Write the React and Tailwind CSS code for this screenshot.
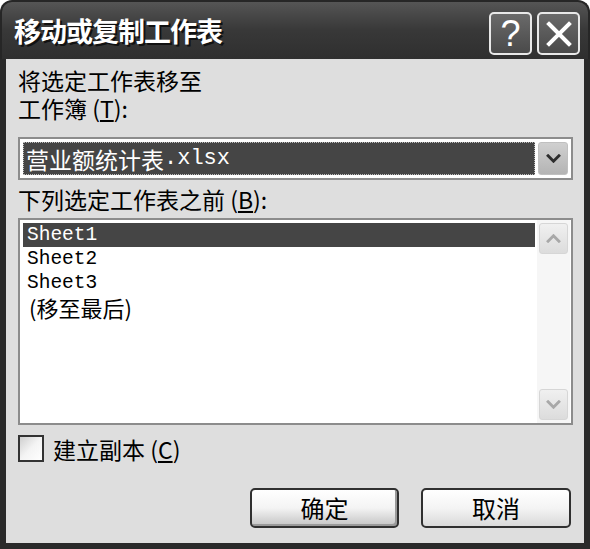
import React from "react";

const cjk = { fontFamily: '"Noto Sans CJK SC", "Noto Sans", sans-serif' };
const mono = { fontFamily: '"Liberation Mono", "Noto Sans CJK SC", monospace' };

function Chevron({ up = false, color = "#333", w = 16 }) {
  return (
    <svg width={w} height={w * 0.6} viewBox="0 0 16 10">
      <polyline
        points={up ? "2,8 8,2 14,8" : "2,2 8,8 14,2"}
        fill="none"
        stroke={color}
        strokeWidth="3.2"
        strokeLinecap="square"
      />
    </svg>
  );
}

export default function App() {
  return (
    <div className="w-[590px] h-[549px] bg-white flex flex-col" style={cjk}>
      {/* title bar */}
      <div className="h-[59px] rounded-t-[12px] bg-gradient-to-b from-[#555555] via-[#383838] to-[#2f2f2f] flex items-center pl-[12px] pr-[8px] border-x-[2px] border-t-[2px] border-[#262626]">
        <div className="flex-1 text-white text-[27px] font-bold leading-none tracking-[-1px] [text-shadow:2px_2px_0_#111]">
          移动或复制工作表
        </div>
        <div className="flex gap-[5px] mt-[6px]">
          <div className="w-[43px] h-[43px] rounded-[5px] border-[2px] border-[#e8e8e8] bg-gradient-to-b from-[#6a6a6a] to-[#4a4a4a] flex items-center justify-center text-white text-[36px] leading-none font-['Liberation_Sans']">
            ?
          </div>
          <div className="w-[43px] h-[43px] rounded-[5px] border-[2px] border-[#e8e8e8] bg-gradient-to-b from-[#6a6a6a] to-[#4a4a4a] flex items-center justify-center">
            <svg width="26" height="26" viewBox="0 0 26 26">
              <path d="M3 3 L23 23 M23 3 L3 23" stroke="#fff" strokeWidth="4" strokeLinecap="square" />
            </svg>
          </div>
        </div>
      </div>

      {/* body */}
      <div className="flex-1 bg-[#dedede] border-x-[6px] border-b-[6px] border-[#2a2a2a] pl-[12px] pr-[11px] flex flex-col text-[23px] leading-[24px] text-black">
        <div className="mt-[7px] h-[28px] flex items-center">将选定工作表移至</div>
        <div className="h-[28px] flex items-center">
          工作簿&nbsp;(<span className="underline underline-offset-2">T</span>):
        </div>

        {/* combo */}
        <div className="mt-[15px] h-[43px] border-[2px] border-[#8c8c8c] bg-white p-[3px] flex items-center gap-[3px]">
          <div className="flex-1 h-full bg-[#454545] border border-dotted border-[#bbbbbb] text-white flex items-center pl-[2px] text-[23px]">
            营业额统计表<span style={mono} className="text-[22px]">.xlsx</span>
          </div>
          <div className="w-[30px] h-full rounded-[3px] bg-gradient-to-b from-[#d0d0d0] to-[#b4b4b4] border border-[#c0c0c0] flex items-center justify-center">
            <Chevron color="#2d2d2d" w={15} />
          </div>
        </div>

        <div className="mt-[5px] h-[28px] flex items-center">
          下列选定工作表之前&nbsp;(<span className="underline underline-offset-2">B</span>):
        </div>

        {/* listbox */}
        <div className="mt-[5px] h-[207px] border-[2px] border-[#8c8c8c] bg-white flex p-[3px] pr-[1px]">
          <div className="flex-1 flex flex-col">
            <div className="h-[24px] bg-[#454545] text-white flex items-center pl-[4px] text-[19.5px]" style={mono}>
              Sheet1
            </div>
            <div className="h-[24px] flex items-center pl-[4px] text-[19.5px]" style={mono}>
              Sheet2
            </div>
            <div className="h-[24px] flex items-center pl-[4px] text-[19.5px]" style={mono}>
              Sheet3
            </div>
            <div className="h-[24px] flex items-center pl-[6px] text-[22px]">
              (移至最后)
            </div>
          </div>
          <div className="w-[33px] -my-[3px] bg-[#f6f6f6] flex flex-col justify-between items-center py-[3px] ml-[2px]">
            <div className="w-[29px] h-[31px] rounded-[3px] bg-gradient-to-b from-[#f0f0f0] to-[#dcdcdc] border border-[#d6d6d6] flex items-center justify-center">
              <Chevron up color="#a8a8a8" w={15} />
            </div>
            <div className="w-[29px] h-[31px] rounded-[3px] bg-gradient-to-b from-[#f0f0f0] to-[#dcdcdc] border border-[#d6d6d6] flex items-center justify-center">
              <Chevron color="#a8a8a8" w={15} />
            </div>
          </div>
        </div>

        {/* checkbox */}
        <div className="mt-[10px] h-[27px] flex items-center gap-[9px]">
          <div className="w-[26px] h-[27px] border-[2px] border-[#333] bg-gradient-to-br from-[#cfcfcf] via-[#f4f4f4] to-white" />
          <div className="text-[23px]">
            建立副本&nbsp;(<span className="underline underline-offset-2">C</span>)
          </div>
        </div>

        {/* buttons */}
        <div className="mt-[26px] flex justify-end gap-[22px] pr-[2px]">
          <div className="w-[149px] h-[40px] rounded-[5px] border-[2px] border-[#303030] bg-gradient-to-b from-white via-[#f4f4f4] to-[#c4c4c4] flex items-center justify-center text-[24px] shadow-[inset_-2px_-2px_0_#9a9a9a]">
            确定
          </div>
          <div className="w-[150px] h-[40px] rounded-[5px] border-[2px] border-[#303030] bg-gradient-to-b from-white via-[#f4f4f4] to-[#dadada] flex items-center justify-center text-[24px]">
            取消
          </div>
        </div>
      </div>
    </div>
  );
}
